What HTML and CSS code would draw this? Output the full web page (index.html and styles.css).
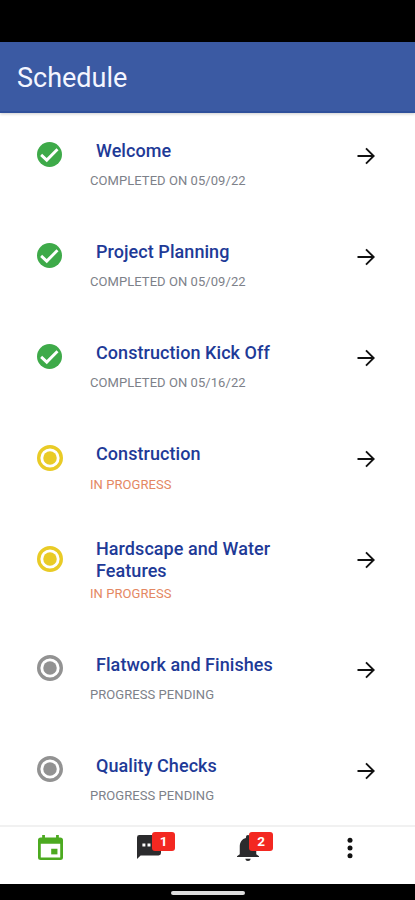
FILE: index.html
```html
<!DOCTYPE html>
<html lang="en">
<head>
<meta charset="utf-8">
<title>Schedule</title>
<link rel="stylesheet" href="styles.css">
</head>
<body>
<svg class="defs" width="0" height="0" aria-hidden="true">
  <symbol id="check" viewBox="2 2 20 20"><circle cx="12" cy="12" r="10"/><path class="tick" d="M5.300 12.300 9.800 16.500l8.600-8.700"/></symbol>
  <symbol id="radio" viewBox="2 2 20 20"><circle cx="12" cy="12" r="5.200"/><path d="M12 2a10 10 0 1 0 0 20 10 10 0 0 0 0-20zm0 17.400a7.400 7.400 0 1 1 0-14.800 7.400 7.400 0 0 1 0 14.800z"/></symbol>
  <symbol id="arrow" viewBox="0 0 18 18"><path class="shaft" d="M0.500 9h16M9 1.300 16.700 9 9 16.700"/></symbol>
</svg>
<div class="status-bar"></div>
<header class="app-bar"><h1>Schedule</h1></header>
<main class="list">
  <article class="row done"><svg class="state"><use href="#check"/></svg><div class="text"><h2>Welcome</h2><p>COMPLETED ON 05/09/22</p></div><svg class="arrow"><use href="#arrow"/></svg></article>
  <article class="row done"><svg class="state"><use href="#check"/></svg><div class="text"><h2>Project Planning</h2><p>COMPLETED ON 05/09/22</p></div><svg class="arrow"><use href="#arrow"/></svg></article>
  <article class="row done"><svg class="state"><use href="#check"/></svg><div class="text"><h2>Construction Kick Off</h2><p>COMPLETED ON 05/16/22</p></div><svg class="arrow"><use href="#arrow"/></svg></article>
  <article class="row active"><svg class="state"><use href="#radio"/></svg><div class="text"><h2>Construction</h2><p>IN PROGRESS</p></div><svg class="arrow"><use href="#arrow"/></svg></article>
  <article class="row active tall"><svg class="state"><use href="#radio"/></svg><div class="text"><h2>Hardscape and Water<br>Features</h2><p>IN PROGRESS</p></div><svg class="arrow"><use href="#arrow"/></svg></article>
  <article class="row pending"><svg class="state"><use href="#radio"/></svg><div class="text"><h2>Flatwork and Finishes</h2><p>PROGRESS PENDING</p></div><svg class="arrow"><use href="#arrow"/></svg></article>
  <article class="row pending"><svg class="state"><use href="#radio"/></svg><div class="text"><h2>Quality Checks</h2><p>PROGRESS PENDING</p></div><svg class="arrow"><use href="#arrow"/></svg></article>
</main>
<nav class="tabs">
  <span class="tab"><svg class="calendar" viewBox="3 1 18 20" preserveAspectRatio="none"><path d="M19 3h-1V1h-2v2H8V1H6v2H5a2 2 0 0 0-2 2v14a2 2 0 0 0 2 2h14a2 2 0 0 0 2-2V5a2 2 0 0 0-2-2zm0 16H5V8h14z" fill-rule="evenodd"/><path d="M12.500 12h4.500v4.500h-4.500z"/></svg></span>
  <span class="tab"><span class="holder"><svg class="chat" viewBox="2 2 20 20"><path d="M20 2H4a2 2 0 0 0-2 2v18l3-3h15a2 2 0 0 0 2-2V4a2 2 0 0 0-2-2zM9 11.500H6.500V9H9zm4.250 0h-2.500V9h2.500zM18 11.500h-2.500V9H18z"/></svg><b class="badge">1</b></span></span>
  <span class="tab"><span class="holder"><svg class="bell" viewBox="4 2.500 16 19.500" preserveAspectRatio="none"><path d="M12 22a2 2 0 0 0 2-1.700h-4A2 2 0 0 0 12 22zm6-5v-6c0-3.070-1.640-5.640-4.500-6.320V4a1.500 1.500 0 0 0-3 0v.680C7.630 5.360 6 7.920 6 11v6l-2 1.500V19h16v-.500z"/></svg><b class="badge bell-badge">2</b></span></span>
  <span class="tab"><svg class="more" viewBox="0 0 6 22"><circle cx="3" cy="3.300" r="2.500"/><circle cx="3" cy="11" r="2.500"/><circle cx="3" cy="18.700" r="2.500"/></svg></span>
</nav>
<footer class="system-bar"><span class="handle"></span></footer>
</body>
</html>
```
FILE: styles.css
```css
* { box-sizing: border-box; }
body {
  margin: 0;
  width: 415px;
  height: 900px;
  overflow: hidden;
  display: flex;
  flex-direction: column;
  background: #fff;
  font-family: Roboto, "Liberation Sans", sans-serif;
}
.defs { position: absolute; }
h1, h2, p { margin: 0; }
.status-bar { flex: 0 0 42px; background: #000; }
.app-bar {
  flex: 0 0 71px;
  padding: 20px 17px 0;
  background: #3b5aa3;
  border-bottom: 2px solid #2f509b;
  box-shadow: 0 1px 3px #0003;
}
.app-bar h1 {
  color: #f4f6ff;
  font-size: 27px;
  font-weight: 400;
  line-height: 33px;
}
.list { flex: 0 0 712px; overflow: hidden; }
.row {
  height: 101px;
  padding: 27px 40px 0 36.5px;
  display: flex;
  align-items: flex-start;
}
.state { width: 25px; height: 25px; margin-top: 2px; }
.done .state { fill: #3eaa49; }
.tick { fill: none; stroke: #fff; stroke-width: 2.3; }
.active .state { width: 26px; height: 26px; margin-top: 1.5px; fill: #e9cb26; }
.pending .state { width: 26px; height: 26px; margin-top: 1px; fill: #929292; }
.text { flex: 1; margin-left: 28.5px; }
.active .text, .pending .text { margin-left: 27.5px; }
.text h2 {
  padding-left: 6px;
  color: #1e3a97;
  font-size: 18px;
  font-weight: 500;
  line-height: 22px;
  letter-spacing: 0.06px;
}
.text p {
  margin-top: 11px;
  color: #7d8189;
  font-size: 13px;
  line-height: 16px;
  letter-spacing: 0.06px;
}
.active .text p { color: #e48762; }
.arrow { width: 18px; height: 18px; margin-top: 7px; }
.shaft { fill: none; stroke: #111; stroke-width: 1.9; }
.active .text p { margin-top: 12px; }
.tall { height: 110px; }
.tall .text { margin-top: -6px; }
.active.tall .text p { margin-top: 4px; }
.tabs {
  flex: 0 0 59px;
  display: grid;
  grid-template-columns: repeat(4, 100px);
  border-top: 2px solid #f1f1f1;
}
.tab { display: flex; justify-content: center; padding-top: 8px; }
.calendar { width: 25px; height: 25px; fill: #4caa20; }
.holder { position: relative; width: 26px; height: 26px; }
.chat { width: 24px; height: 24px; fill: #2b2b2d; }
.bell { width: 22px; height: 26px; fill: #2b2b2d; }
.badge {
  position: absolute;
  left: 15px;
  top: -3px;
  width: 23px;
  height: 19px;
  border-radius: 3px;
  background: #f32821;
  color: #fff;
  font-size: 13.5px;
  line-height: 19px;
  text-align: center;
}
.bell-badge { left: 12px; width: 24px; }
.more { width: 6px; height: 22px; margin-top: 1.5px; fill: #111; }
.system-bar {
  flex: 0 0 16px;
  display: flex;
  justify-content: center;
  padding-top: 7px;
  background: #000;
}
.handle { width: 74px; height: 4px; border-radius: 2px; background: #ddd; }
```
